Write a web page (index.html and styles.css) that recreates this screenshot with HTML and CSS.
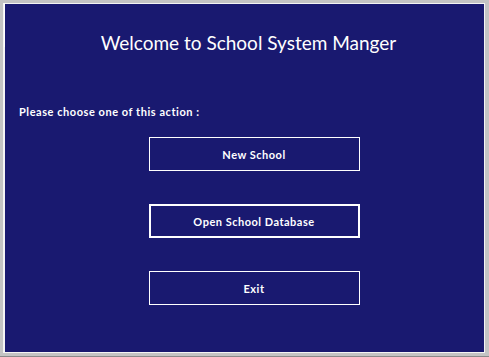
FILE: index.html
```html
<!DOCTYPE html>
<html lang="en">

<head>
    <meta charset="UTF-8">
    <meta name="viewport" content="width=device-width, initial-scale=1.0">
    <title>School System Manger</title>
    <link rel="stylesheet" href="styles.css">
</head>

<body>
    <div class="form">
        <h1 class="title">Welcome to School System Manger</h1>
        <p class="prompt">Please choose one of this action :</p>
        <div class="actions">
            <button class="action">New School</button>
            <button class="action focused">Open School Database</button>
            <button class="action">Exit</button>
        </div>
    </div>
</body>

</html>
```

FILE: styles.css
```css
* {
    margin: 0;
    padding: 0;
    box-sizing: border-box;
    font-family: Lato, 'Liberation Sans', sans-serif;
}

body {
    width: 489px;
    height: 357px;
    background: #c4c4c4;
    padding: 3px 4px 3px 3px;
    border-bottom: 1px solid #8a8a8a;
}

/* the window client area */
.form {
    position: relative;
    height: 100%;
    background: #191970;
    border: 1px solid #f4f4f4;
    border-left-width: 2px;
    color: #fff;
}

.form::before {
    content: '';
    position: absolute;
    left: -1px;
    top: -1px;
    width: 1px;
    height: 44px;
    background: #fff;
}

.title {
    margin-top: 27px;
    padding-left: 8px;
    font-size: 19px;
    line-height: 24px;
    font-weight: normal;
    text-align: center;
}

.prompt {
    margin-top: 50px;
    margin-left: 14px;
    font-size: 11px;
    line-height: 14px;
    font-weight: bold;
    letter-spacing: 0.55px;
}

.actions {
    display: flex;
    flex-direction: column;
    align-items: center;
    gap: 33px;
    margin-top: 18px;
    padding-left: 19px;
}

.action {
    width: 211px;
    height: 34px;
    background: transparent;
    border: 1px solid #fff;
    color: #fff;
    font-size: 11px;
    font-weight: bold;
    letter-spacing: 0.5px;
    cursor: pointer;
}

.action.focused {
    border-width: 2px;
}
```
